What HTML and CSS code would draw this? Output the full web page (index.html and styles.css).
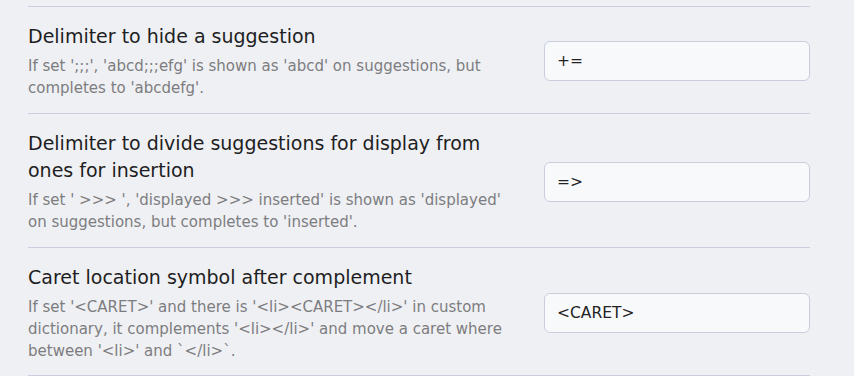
FILE: index.html
```html
<!DOCTYPE html>
<html>
<head>
<meta charset="utf-8">
<link rel="stylesheet" href="styles.css">
</head>
<body>
<div class="settings">
  <div class="setting-item">
    <div class="setting-info">
      <div class="setting-name">Delimiter to hide a suggestion</div>
      <div class="setting-desc">If set ';;;', 'abcd;;;efg' is shown as 'abcd' on suggestions, but completes to 'abcdefg'.</div>
    </div>
    <div class="setting-control"><input class="text-input" type="text" value="+="></div>
  </div>
  <div class="setting-item">
    <div class="setting-info">
      <div class="setting-name">Delimiter to divide suggestions for display from ones for insertion</div>
      <div class="setting-desc">If set ' &gt;&gt;&gt; ', 'displayed &gt;&gt;&gt; inserted' is shown as 'displayed' on suggestions, but completes to 'inserted'.</div>
    </div>
    <div class="setting-control"><input class="text-input" type="text" value="=>"></div>
  </div>
  <div class="setting-item">
    <div class="setting-info">
      <div class="setting-name">Caret location symbol after complement</div>
      <div class="setting-desc">If set '&lt;CARET&gt;' and there is '&lt;li&gt;&lt;CARET&gt;&lt;/li&gt;' in custom dictionary, it complements '&lt;li&gt;&lt;/li&gt;' and move a caret where between '&lt;li&gt;' and `&lt;/li&gt;`.</div>
    </div>
    <div class="setting-control"><input class="text-input" type="text" value="<CARET>"></div>
  </div>
</div>
</body>
</html>
```
FILE: styles.css
```css
html, body {
  margin: 0;
  padding: 0;
  background: #eff0f4;
  font-family: "DejaVu Sans", "Noto Sans CJK JP", sans-serif;
}
.settings {
  padding: 6px 44px 0 28px;
}
.setting-item {
  display: flex;
  align-items: center;
  border-top: 1px solid #c9cfe0;
  padding: 16px 0 14px;
}
.setting-item:last-child {
  border-bottom: 1px solid #c9cfe0;
  padding-bottom: 13px;
}
.setting-info {
  flex: 1 1 auto;
  margin-right: 24px;
}
.setting-name {
  font-size: 19px;
  line-height: 27px;
  color: #1e1e22;
  margin-bottom: 5px;
}
.setting-desc {
  font-size: 15px;
  line-height: 22px;
  color: #7d7d80;
}
.setting-control {
  flex: 0 0 auto;
}
.text-input {
  box-sizing: border-box;
  width: 266px;
  height: 40px;
  padding: 0 12px;
  border: 1px solid #c8cede;
  border-radius: 6px;
  background: #f8f9fb;
  font-family: "DejaVu Sans", "Noto Sans CJK JP", sans-serif;
  font-size: 15.5px;
  color: #222;
  outline: none;
}
```
